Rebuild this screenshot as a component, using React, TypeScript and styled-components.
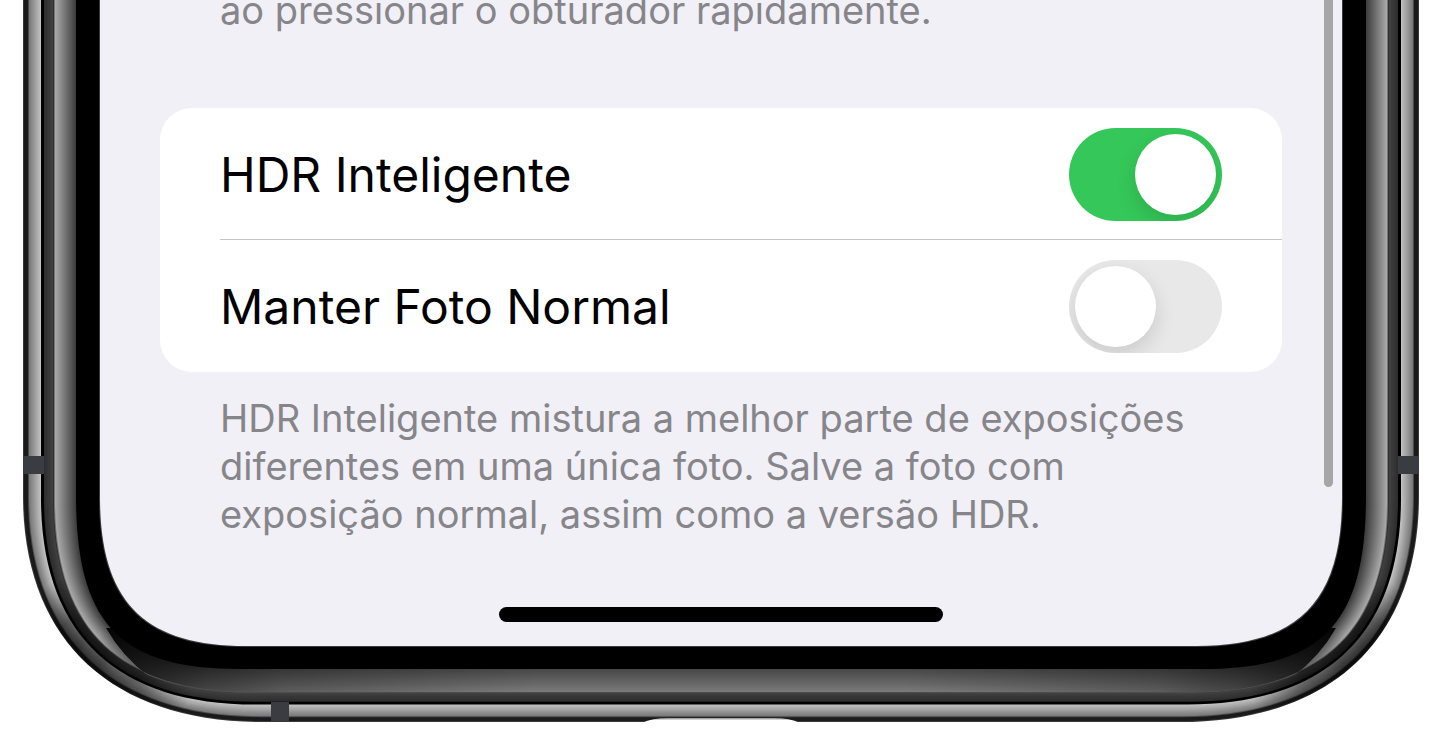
import React, { useId, useState } from "react";
import styled, { createGlobalStyle } from "styled-components";

const GlobalStyle = createGlobalStyle`
  *, *::before, *::after { box-sizing: border-box; }
  body {
    margin: 0;
    background: #fff;
    font-family: Inter, "Noto Sans", sans-serif;
  }
`;

const Phone = styled.main`
  position: relative;
  overflow: hidden;
  padding: 0 101px 89px 100px;
`;

const Frame = styled.svg`
  position: absolute;
  inset: 0;
  width: 100%;
  height: 100%;
`;

const Screen = styled.div`
  position: relative;
  display: flex;
  flex-direction: column;
  padding-bottom: 24px;
`;

const Viewport = styled.div`
  display: flex;
  align-items: flex-end;
  height: 34px;
  margin-bottom: 74px;
  overflow: hidden;
`;

const Note = styled.p`
  margin: 0;
  padding: 0 120px;
  font-size: 38px;
  line-height: 48px;
  color: #86858a;
`;

const Group = styled.section`
  margin: 0 60px 22px;
  padding-left: 60px;
  border-radius: 32px;
  background: #fff;
`;

const Row = styled.div<{ $divided?: boolean }>`
  display: flex;
  align-items: center;
  justify-content: space-between;
  padding: 20px 60px 19px 0;
  box-shadow: ${(p) => (p.$divided ? "inset 0 -1px #c6c6c8" : "none")};
`;

const Label = styled.label`
  font-size: 48px;
  line-height: 60px;
  color: #000;
`;

const Switch = styled.input`
  appearance: none;
  flex: none;
  display: flex;
  justify-content: flex-start;
  width: 153px;
  height: 93px;
  margin: 0;
  padding: 6px;
  border-radius: 47px;
  background: #e8e8e8;
  overflow: hidden;
  cursor: pointer;

  &::before {
    content: "";
    width: 81px;
    height: 81px;
    border-radius: 50%;
    background: #fff;
    box-shadow: 0 8px 20px rgba(0, 0, 0, 0.13);
  }

  &:checked {
    justify-content: flex-end;
    background: #35c759;
  }
`;

const HomeIndicator = styled.div`
  align-self: center;
  width: 444px;
  max-width: 50%;
  height: 15px;
  margin-top: 69px;
  border-radius: 8px;
  background: #000;
`;

const ScrollThumb = styled.div`
  position: absolute;
  top: 0;
  right: 9px;
  width: 9px;
  height: 487px;
  border-radius: 0 0 5px 5px;
  background: #a6a6a8;
`;

type Point = [number, number];

/* Bottom left corner curve at the depths where the body changes facet. */
const CORNERS: { depth: number; curve: Point[] }[] = [
  { depth: 0, curve: [[23, 496], [23, 640], [112, 722], [262, 722]] },
  { depth: 31, curve: [[54, 500], [54, 628], [118, 692], [250, 692]] },
  { depth: 53, curve: [[76, 495], [76, 622], [118, 669], [240, 669]] },
  { depth: 77, curve: [[100, 497], [100, 602], [144, 646], [246, 646]] },
];
const MIRROR = 1442;

/* Outline of the body, inset from its outer edge by the given depth. */
function outline(depth: number) {
  const next = Math.max(1, CORNERS.findIndex((c) => c.depth >= depth));
  const a = CORNERS[next - 1];
  const b = CORNERS[next];
  const t = (depth - a.depth) / (b.depth - a.depth);
  const p = a.curve.map(([x, y], i): Point => [
    x + (b.curve[i][0] - x) * t,
    y + (b.curve[i][1] - y) * t,
  ]);
  const q = p.map(([x, y]): Point => [MIRROR - x, y]);
  const s = (v: Point) => v[0].toFixed(2) + " " + v[1].toFixed(2);
  return (
    `M${p[0][0]} -2 L${s(p[0])} C${s(p[1])} ${s(p[2])} ${s(p[3])} ` +
    `L${s(q[3])} C${s(q[2])} ${s(q[1])} ${s(q[0])} L${q[0][0]} -2 Z`
  );
}

const gray = (v: number) => `rgb(${Math.round(v)},${Math.round(v)},${Math.round(v)})`;

function Rings({ from, to, start, end }: { from: number; to: number; start: number; end: number }) {
  const count = to - from;
  return (
    <>
      {Array.from({ length: count }, (_, i) => (
        <path key={i} d={outline(from + i)} fill={gray(start + ((end - start) * i) / (count - 1))} />
      ))}
    </>
  );
}

function PhoneFrame() {
  return (
    <Frame viewBox="0 0 1443 735" preserveAspectRatio="none" aria-hidden="true">
      <defs>
        <radialGradient id="cornerShade">
          <stop offset="0" stopColor="#000" stopOpacity="0.6" />
          <stop offset="0.4" stopColor="#000" stopOpacity="0.5" />
          <stop offset="1" stopColor="#000" stopOpacity="0" />
        </radialGradient>
        <radialGradient id="facetShade">
          <stop offset="0" stopColor="#000" stopOpacity="0.5" />
          <stop offset="1" stopColor="#000" stopOpacity="0" />
        </radialGradient>
        <linearGradient id="bottomShade" gradientUnits="userSpaceOnUse" x1="110" x2="1332" y1="0" y2="0">
          <stop offset="0" stopColor="#000" stopOpacity="0.92" />
          <stop offset="0.04" stopColor="#000" stopOpacity="0.68" />
          <stop offset="0.08" stopColor="#000" stopOpacity="0.44" />
          <stop offset="0.14" stopColor="#000" stopOpacity="0.25" />
          <stop offset="0.35" stopColor="#000" stopOpacity="0" />
          <stop offset="0.65" stopColor="#000" stopOpacity="0" />
          <stop offset="0.86" stopColor="#000" stopOpacity="0.25" />
          <stop offset="0.92" stopColor="#000" stopOpacity="0.44" />
          <stop offset="0.96" stopColor="#000" stopOpacity="0.68" />
          <stop offset="1" stopColor="#000" stopOpacity="0.92" />
        </linearGradient>
        <linearGradient id="notch" x1="0" x2="0" y1="0" y2="1">
          <stop offset="0" stopColor="#8a8a8a" />
          <stop offset="0.5" stopColor="#fff" />
        </linearGradient>
        <clipPath id="bottomFacet">
          <path d="M106 628 Q122 656 148 676 L180 735 H1262 L1294 676 Q1320 656 1336 628 Z" />
        </clipPath>
        <clipPath id="rim">
          <path d={outline(0)} />
        </clipPath>
      </defs>

      <path d={outline(0)} fill="#3a3a3c" />
      <path d={outline(1)} fill="#1b1a1b" />
      <path d={outline(5)} fill="#4c4a4b" />
      <Rings from={6} to={18} start={122} end={192} />
      <path d={outline(18)} fill="#000" />
      <Rings from={21} to={31} start={46} end={66} />
      <g clipPath="url(#rim)">
        <ellipse cx="80" cy="648" rx="62" ry="74" fill="url(#cornerShade)" />
        <ellipse cx="1362" cy="648" rx="62" ry="74" fill="url(#cornerShade)" />
      </g>
      <path d={outline(30)} fill="#303030" />
      <path d={outline(31)} fill="#757575" />
      <Rings from={32} to={53} start={168} end={62} />
      <g clipPath="url(#rim)">
        <circle cx="136" cy="678" r="58" fill="url(#facetShade)" />
        <circle cx="1306" cy="678" r="58" fill="url(#facetShade)" />
      </g>
      <g clipPath="url(#bottomFacet)">
        <path d={outline(30)} fill="#4d4d4d" />
        <Rings from={31} to={53} start={122} end={72} />
        <path d={outline(31)} fill="url(#bottomShade)" />
      </g>
      <path d={outline(53)} fill="#000" />
      <path d={outline(76)} fill="#3c3c3e" />
      <path d={outline(77)} fill="#f1f0f6" />

      <g fill="#3b3c41">
        <rect x="23" y="456" width="21" height="18" />
        <rect x="1398" y="456" width="21" height="18" />
        <rect x="271" y="702" width="18" height="19" />
      </g>
      <path d="M642 723 Q652 718 668 718 H774 Q790 718 800 723 Z" fill="url(#notch)" />
    </Frame>
  );
}

function SwitchRow({ label, initial, divided }: { label: string; initial: boolean; divided?: boolean }) {
  const id = useId();
  const [on, setOn] = useState(initial);
  return (
    <Row $divided={divided}>
      <Label htmlFor={id}>{label}</Label>
      <Switch id={id} type="checkbox" role="switch" checked={on} onChange={() => setOn(!on)} />
    </Row>
  );
}

export default function App() {
  return (
    <>
      <GlobalStyle />
      <Phone>
        <PhoneFrame />
        <Screen>
          <Viewport>
            <Note>ao pressionar o obturador rapidamente.</Note>
          </Viewport>
          <Group>
            <SwitchRow label="HDR Inteligente" initial divided />
            <SwitchRow label="Manter Foto Normal" initial={false} />
          </Group>
          <Note>
            HDR Inteligente mistura a melhor parte de exposições diferentes em uma única foto. Salve a
            foto com exposição normal, assim como a versão HDR.
          </Note>
          <HomeIndicator />
          <ScrollThumb />
        </Screen>
      </Phone>
    </>
  );
}
